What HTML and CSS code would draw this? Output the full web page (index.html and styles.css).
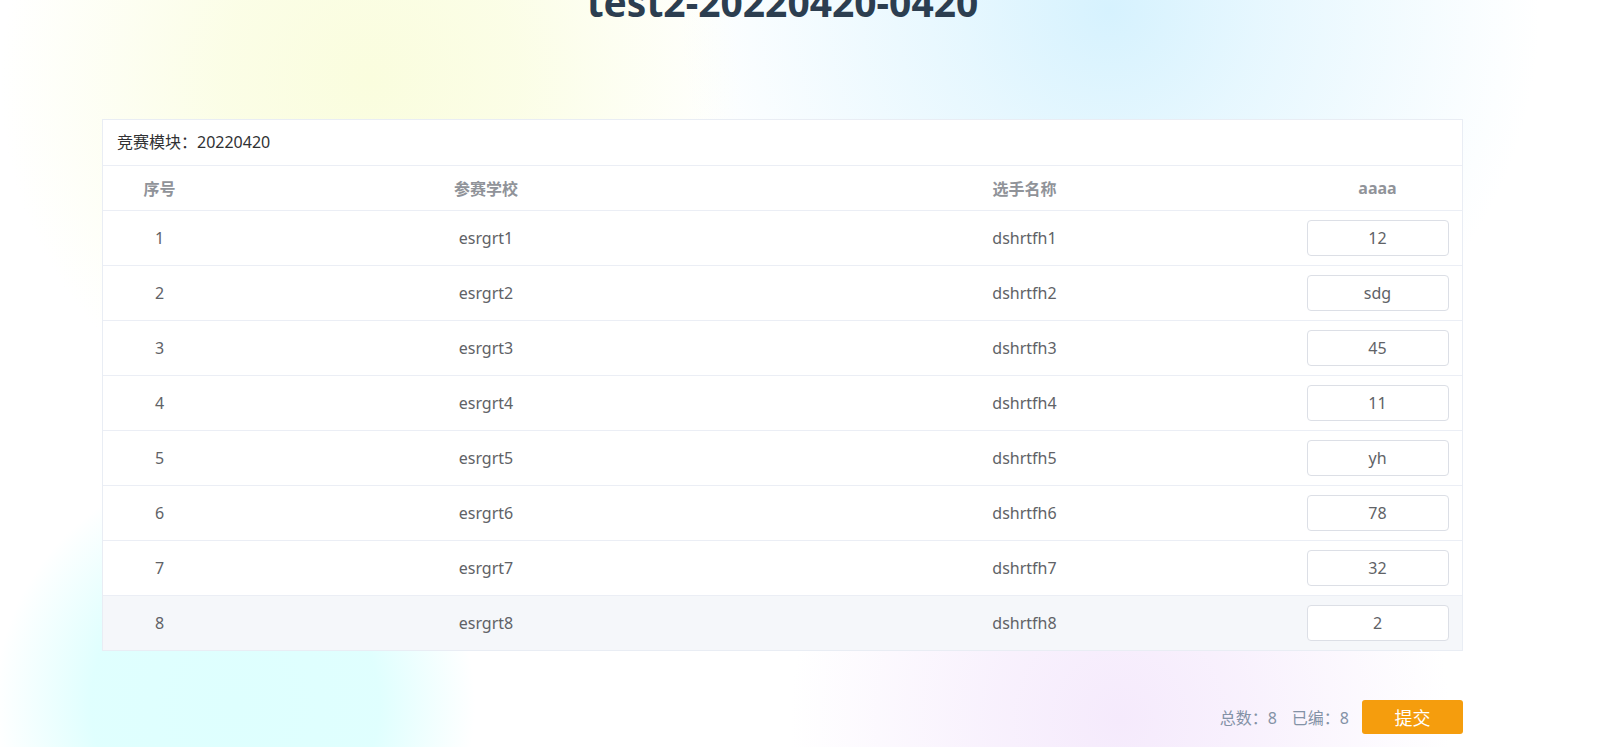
FILE: index.html
```html
<!DOCTYPE html>
<html lang="zh-CN">
<head>
<meta charset="utf-8">
<title>test2-20220420-0420</title>
<link rel="stylesheet" href="styles.css">
</head>
<body>
<div class="page">
  <h1 class="title">test2-20220420-0420</h1>
  <div class="card">
    <div class="card-head">竞赛模块：20220420</div>
    <table class="grid">
      <colgroup>
        <col class="c1"><col class="c2"><col class="c3"><col class="c4">
      </colgroup>
      <thead>
        <tr><th>序号</th><th>参赛学校</th><th>选手名称</th><th>aaaa</th></tr>
      </thead>
      <tbody>
        <tr><td>1</td><td>esrgrt1</td><td>dshrtfh1</td><td><input class="cell-input" value="12"></td></tr>
        <tr><td>2</td><td>esrgrt2</td><td>dshrtfh2</td><td><input class="cell-input" value="sdg"></td></tr>
        <tr><td>3</td><td>esrgrt3</td><td>dshrtfh3</td><td><input class="cell-input" value="45"></td></tr>
        <tr><td>4</td><td>esrgrt4</td><td>dshrtfh4</td><td><input class="cell-input" value="11"></td></tr>
        <tr><td>5</td><td>esrgrt5</td><td>dshrtfh5</td><td><input class="cell-input" value="yh"></td></tr>
        <tr><td>6</td><td>esrgrt6</td><td>dshrtfh6</td><td><input class="cell-input" value="78"></td></tr>
        <tr><td>7</td><td>esrgrt7</td><td>dshrtfh7</td><td><input class="cell-input" value="32"></td></tr>
        <tr class="hover"><td>8</td><td>esrgrt8</td><td>dshrtfh8</td><td><input class="cell-input" value="2"></td></tr>
      </tbody>
    </table>
  </div>
  <div class="footer">
    <span class="stat">总数：8</span>
    <span class="stat">已编：8</span>
    <button class="submit">提交</button>
  </div>
</div>
</body>
</html>
```

FILE: styles.css
```css
html, body {
  margin: 0;
  padding: 0;
}
body {
  width: 1597px;
  height: 747px;
  overflow: hidden;
  font-family: "Noto Sans", "Noto Sans CJK SC", sans-serif;
  background-color: #ffffff;
  background-image:
    radial-gradient(circle 370px at 370px 80px, rgba(250, 253, 222, 1) 0%, rgba(250, 253, 222, 0.75) 40%, rgba(255, 255, 255, 0) 100%),
    radial-gradient(circle 430px at 1110px 10px, rgba(214, 242, 254, 1) 0%, rgba(214, 242, 254, 0.6) 35%, rgba(255, 255, 255, 0) 100%),
    radial-gradient(circle 240px at 235px 705px, rgba(222, 255, 254, 1) 0%, rgba(222, 255, 254, 0.95) 60%, rgba(255, 255, 255, 0) 100%),
    radial-gradient(circle 330px at 1120px 720px, rgba(245, 234, 252, 1) 0%, rgba(245, 234, 252, 0.65) 40%, rgba(255, 255, 255, 0) 100%);
}
.page {
  width: 1361px;
  margin-left: 102px;
}
.title {
  margin: -17px 0 98px;
  font-size: 39px;
  line-height: 38px;
  font-weight: 700;
  color: #2c3e50;
  text-align: center;
}
.card {
  background: #ffffff;
  border: 1px solid #e9edf4;
}
.card-head {
  height: 45px;
  line-height: 45px;
  padding-left: 14px;
  font-size: 16px;
  color: #303133;
  border-bottom: 1px solid #ebeef5;
}
.grid {
  width: 100%;
  border-collapse: collapse;
  table-layout: fixed;
}
.c1 { width: 113px; }
.c2 { width: 540px; }
.c3 { width: 537px; }
.c4 { width: 169px; }
.grid th {
  height: 44px;
  padding: 0;
  font-size: 16px;
  font-weight: 700;
  color: #909399;
  text-align: center;
  border-bottom: 1px solid #ebeef5;
}
.grid td {
  height: 54px;
  padding: 0;
  font-size: 16px;
  color: #606266;
  text-align: center;
  border-bottom: 1px solid #ebeef5;
}
.grid tbody tr:last-child td {
  border-bottom: none;
}
.grid tr.hover td {
  background: #f5f7fa;
}
.cell-input {
  box-sizing: border-box;
  display: block;
  margin: 0 auto;
  width: 142px;
  height: 36px;
  padding: 0 10px;
  border: 1px solid #dcdfe6;
  border-radius: 4px;
  background: #ffffff;
  font-family: "Noto Sans", "Noto Sans CJK SC", sans-serif;
  font-size: 16px;
  color: #606266;
  text-align: center;
  outline: none;
}
.footer {
  display: flex;
  justify-content: flex-end;
  align-items: center;
  gap: 15px;
  margin-top: 49px;
}
.stat {
  font-size: 16px;
  color: #8492a6;
}
.submit {
  margin-left: -2px;
  width: 101px;
  height: 34px;
  border: none;
  border-radius: 3px;
  background: #f59d0d;
  color: #ffffff;
  font-family: "Noto Sans", "Noto Sans CJK SC", sans-serif;
  font-size: 18px;
  padding: 0;
}
```
